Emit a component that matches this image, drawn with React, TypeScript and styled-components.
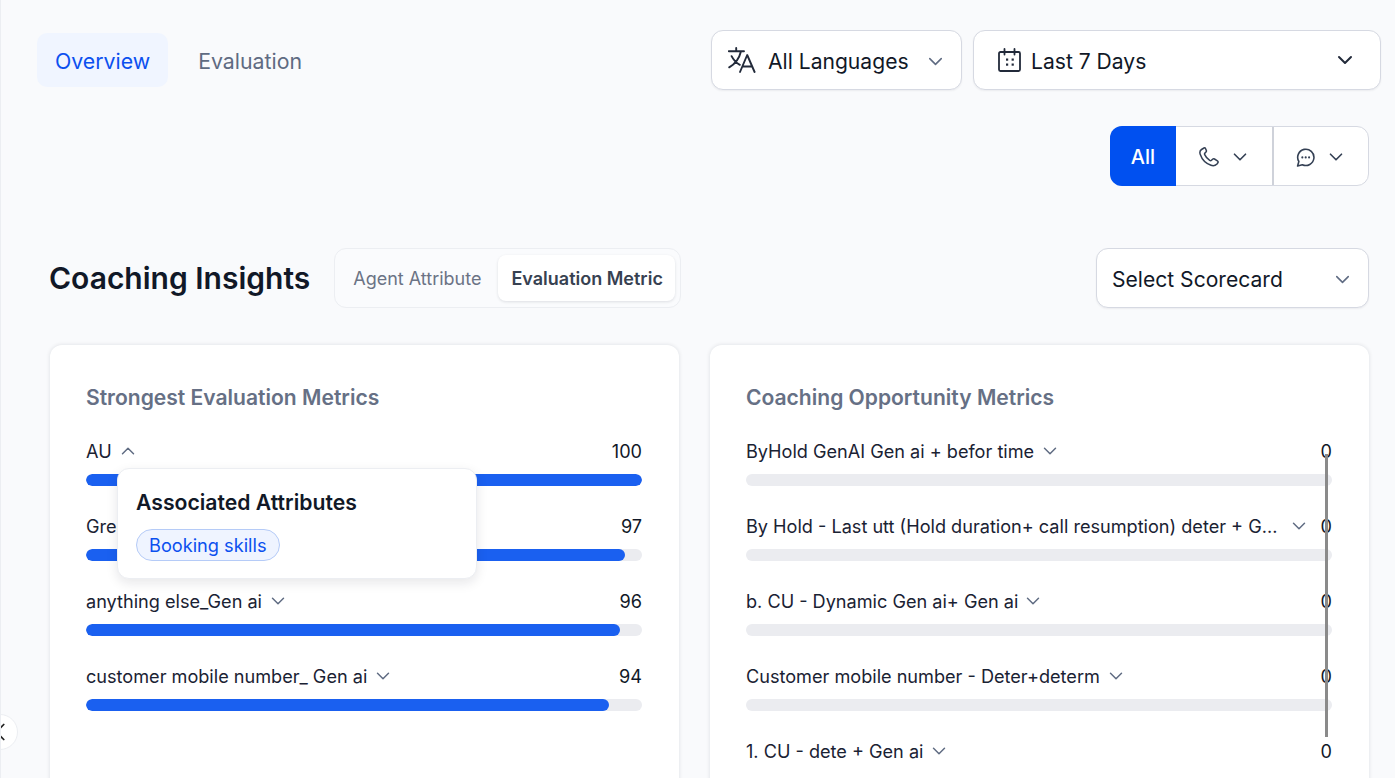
import React from "react";
import styled, { createGlobalStyle } from "styled-components";
import { ChevronDown, ChevronUp, ChevronLeft } from "lucide-react";

const Global = createGlobalStyle`
  html, body { margin: 0; padding: 0; height: 778px; overflow: hidden; background: #f9fafc; }
  * { box-sizing: border-box; }
  body { font-family: Inter, "Liberation Sans", sans-serif; color: #111827; }
`;

const Page = styled.div`
  position: relative;
  width: 1395px;
  height: 778px;
  overflow: hidden;
  background: #f9fafc;
  border-left: 1px solid #eceef2;
  padding: 30px 14px 0 36px;
`;
const TopBar = styled.div`
  display: flex;
  justify-content: space-between;
  align-items: center;
  height: 60px;
`;
const NavTabs = styled.div`
  display: flex;
`;
const NavTab = styled.div<{ $active?: boolean }>`
  height: 54px;
  padding: 2px 18px 0;
  margin-right: 12px;
  display: flex;
  align-items: center;
  border-radius: 10px;
  font-size: 21.3px;
  background: ${p => (p.$active ? "#f0f5ff" : "transparent")};
  color: ${p => (p.$active ? "#0b50ef" : "#5f6b82")};
`;
const Filters = styled.div`
  display: flex;
  gap: 11px;
`;
const Select = styled.div<{ $w: number; $left?: number; $right?: number }>`
  width: ${p => p.$w}px;
  height: 60px;
  background: #fff;
  border: 1px solid #d6d9e2;
  border-radius: 12px;
  box-shadow: 0 1px 2px rgba(16, 24, 40, 0.06);
  display: flex;
  align-items: center;
  padding: 0 ${p => p.$right ?? 14}px 0 ${p => p.$left ?? 15}px;
  font-size: 21.1px;
  color: #111827;
`;
const SelectLabel = styled.span<{ $gap?: number }>`
  flex: 1;
  margin-left: ${p => p.$gap ?? 0}px;
  padding-top: 2px;
  white-space: nowrap;
`;
const SoftChevron = styled(ChevronDown)`
  flex: none;
  margin-top: 3px;
  color: #5f6b82;
`;
const Glyph = styled.svg`
  flex: none;
  display: block;
  fill: none;
  stroke: currentColor;
  stroke-linecap: round;
  stroke-linejoin: round;
`;
const ChannelRow = styled.div`
  display: flex;
  justify-content: flex-end;
  margin-top: 36px;
  margin-right: 12px;
`;
const Channels = styled.div`
  display: flex;
  height: 60px;
  width: 259px;
  background: #fff;
  border: 1px solid #d6d9e2;
  border-radius: 12px;
`;
const ChannelAll = styled.div`
  width: 66px;
  margin: -1px 0 -1px -1px;
  padding-top: 2px;
  background: #0050f0;
  color: #fff;
  border-radius: 12px 0 0 12px;
  display: flex;
  align-items: center;
  justify-content: center;
  font-size: 20px;
  font-weight: 500;
`;
const ChannelItem = styled.div<{ $w: number; $line?: boolean }>`
  width: ${p => p.$w}px;
  display: flex;
  align-items: center;
  gap: 10px;
  padding: 2px 0 0 ${p => (p.$line ? 22 : 23)}px;
  color: #344054;
  border-left: ${p => (p.$line ? "2px solid #cfd2da" : "none")};
`;
const SectionHead = styled.div`
  display: flex;
  align-items: center;
  margin: 62px 12px 0;
  height: 60px;
`;
const Title = styled.h1`
  margin: 0;
  font-size: 30px;
  line-height: 36px;
  font-weight: 600;
  color: #111827;
  white-space: nowrap;
`;
const Toggle = styled.div`
  display: flex;
  align-items: center;
  gap: 4px;
  margin-left: 24px;
  height: 60px;
  padding: 6px 5px;
  border: 1px solid #eceef2;
  border-radius: 12px;
  background: #fafbfd;
`;
const ToggleItem = styled.div<{ $active?: boolean }>`
  height: 46px;
  padding: 0 ${p => (p.$active ? 12 : 13)}px 0 13px;
  display: flex;
  align-items: center;
  border-radius: 8px;
  font-size: 18px;
  white-space: nowrap;
  font-weight: ${p => (p.$active ? 600 : 400)};
  color: ${p => (p.$active ? "#374151" : "#6b7385")};
  background: ${p => (p.$active ? "#fff" : "transparent")};
  box-shadow: ${p => (p.$active ? "0 1px 3px rgba(16,24,40,.12)" : "none")};
`;
const Spacer = styled.div`
  flex: 1;
`;
const Cards = styled.div`
  display: flex;
  gap: 31px;
  margin-top: 37px;
  margin-left: 13px;
`;
const Card = styled.section<{ $w: number }>`
  position: relative;
  width: ${p => p.$w}px;
  height: 520px;
  flex: none;
  background: #fff;
  border-radius: 12px;
  box-shadow: 0 0 4px rgba(16, 24, 40, 0.12);
  padding: 39px 37px 0 36px;
`;
const CardTitle = styled.h2`
  margin: 0 0 25px;
  font-size: 21.05px;
  line-height: 27px;
  padding-bottom: 1px;
  font-weight: 600;
  color: #667085;
`;
const Row = styled.div`
  position: relative;
  height: 75px;
`;
const RowHead = styled.div`
  display: flex;
  align-items: center;
  justify-content: space-between;
  height: 28px;
  font-size: 18.12px;
  color: #111827;
`;
const RowLabel = styled.div<{ $gap?: number }>`
  display: flex;
  align-items: center;
  gap: ${p => p.$gap ?? 5}px;
  color: #1a2233;
  white-space: nowrap;
`;
const Track = styled.div`
  height: 12px;
  margin-top: 9px;
  border-radius: 6px;
  background: #ebecf0;
  overflow: hidden;
`;
const Fill = styled.div`
  height: 100%;
  border-radius: 6px;
  background: #1a60f0;
`;
const Popover = styled.div`
  position: absolute;
  left: 31px;
  top: 31px;
  z-index: 3;
  width: 360px;
  height: 111px;
  background: #fff;
  border: 1px solid #eceef2;
  border-radius: 12px;
  box-shadow: 0 4px 12px rgba(16, 24, 40, 0.1);
  padding: 19px 18px;
`;
const PopTitle = styled.div`
  font-size: 21.2px;
  line-height: 28px;
  font-weight: 600;
  color: #111827;
  white-space: nowrap;
`;
const Chip = styled.span`
  display: inline-flex;
  align-items: center;
  height: 32px;
  margin-top: 13px;
  padding: 0 12px;
  border-radius: 16px;
  background: #eff4ff;
  border: 1px solid #b5cbf7;
  font-size: 18.2px;
  color: #0b50ef;
`;
const Scrollbar = styled.div`
  position: absolute;
  left: 615px;
  top: 109px;
  width: 3px;
  height: 283px;
  background: #8a8a8a;
  z-index: 2;
`;
const Collapse = styled.div`
  position: absolute;
  left: -19px;
  top: 714px;
  width: 36px;
  height: 36px;
  border-radius: 50%;
  background: #fff;
  border: 1px solid #eceef2;
  display: flex;
  align-items: center;
  justify-content: center;
  color: #222;
  z-index: 4;
`;

const TranslateIcon = () => (
  <Glyph width="28" height="26" viewBox="0 0 28 26" strokeWidth="1.9" color="#222a3a">
    <path d="M.8 4.2H16M8.2 1v3.2M13 4.2C11.5 10.5 7 17 1.2 20.3M3.6 9.2c2 4 5 7 8.2 8.6" />
    <path d="M12 25l7.2-17 7.4 17M14.6 19.5h9.6" />
  </Glyph>
);
const CalendarIcon = () => (
  <Glyph width="23" height="24" viewBox="0 0 23 24" strokeWidth="1.8" color="#222a3a">
    <rect x="1" y="4" width="21" height="19" rx="1.4" />
    <path d="M6.5 1v5.5M16.5 1v5.5" />
    <g fill="currentColor" stroke="none">
      <rect x="8" y="10.5" width="2.2" height="2.2" />
      <rect x="13.6" y="10.5" width="2.2" height="2.2" />
      <rect x="8" y="15.5" width="2.2" height="2.2" />
      <rect x="13.6" y="15.5" width="2.2" height="2.2" />
    </g>
  </Glyph>
);
const PhoneIcon = () => (
  <Glyph width="20" height="20" viewBox="0 0 20 20" strokeWidth="1.5">
    <path d="M5 1 2.5 2.5C.8 3.5.6 5.5 1.3 7.5 3 12.5 7 16.5 12 18.3c2.500.9 4.500.2 6-1.300l1-1.500c.3-.7 0-1.300-.6-1.700L15.500 12c-.7-.4-1.400-.3-1.900.2l-1.100 1.100c-.5.5-1.200.5-1.800.1C8.500 12 6.800 10 5.700 7.600c-.3-.6-.1-1.300.4-1.700L7 5c.5-.5.5-1.200.2-1.800l-.7-1.700C6.200.9 5.600.7 5 1Z" />
  </Glyph>
);
const ChatIcon = () => (
  <Glyph width="19" height="19" viewBox="0 0 18 18" strokeWidth="1.5">
    <path d="M1.500 17 2.700 12.800A7.700 7.700 0 1 1 6 15.800Z" />
    <g fill="currentColor" stroke="none">
      <circle cx="6" cy="8.900" r="1" />
      <circle cx="9.200" cy="8.900" r="1" />
      <circle cx="12.400" cy="8.900" r="1" />
    </g>
  </Glyph>
);

const strong = [
  { label: "AU", value: 100, open: true },
  { label: "Greeting", value: 97 },
  { label: "anything else_Gen ai", value: 96 },
  { label: "customer mobile number_ Gen ai", value: 94 },
];
const weak = [
  { label: "ByHold GenAI Gen ai + befor time", track: true, gap: 5 },
  { label: "By Hold - Last utt (Hold duration+ call resumption) deter + G...", track: true, gap: 11 },
  { label: "b. CU - Dynamic Gen ai+ Gen ai", track: true, gap: 4 },
  { label: "Customer mobile number - Deter+determ", track: true, gap: 5 },
  { label: "1. CU - dete + Gen ai", track: false, gap: 5 },
];

export default function App() {
  return (
    <Page>
      <Global />
      <TopBar>
        <NavTabs>
          <NavTab $active>Overview</NavTab>
          <NavTab>Evaluation</NavTab>
        </NavTabs>
        <Filters>
          <Select $w={251} $left={16} $right={14}>
            <TranslateIcon />
            <SelectLabel $gap={12}>All Languages</SelectLabel>
            <SoftChevron size={23} strokeWidth={1.6} />
          </Select>
          <Select $w={408} $left={24} $right={23}>
            <CalendarIcon />
            <SelectLabel $gap={10}>Last 7 Days</SelectLabel>
            <ChevronDown size={24} color="#222a3a" strokeWidth={2} />
          </Select>
        </Filters>
      </TopBar>
      <ChannelRow>
        <Channels>
          <ChannelAll>All</ChannelAll>
          <ChannelItem $w={96}>
            <PhoneIcon />
            <ChevronDown size={22} strokeWidth={1.8} />
          </ChannelItem>
          <ChannelItem $w={96} $line>
            <ChatIcon />
            <ChevronDown size={22} strokeWidth={1.8} />
          </ChannelItem>
        </Channels>
      </ChannelRow>
      <SectionHead>
        <Title>Coaching Insights</Title>
        <Toggle>
          <ToggleItem>Agent Attribute</ToggleItem>
          <ToggleItem $active>Evaluation Metric</ToggleItem>
        </Toggle>
        <Spacer />
        <Select $w={273}>
          <SelectLabel>Select Scorecard</SelectLabel>
          <SoftChevron size={23} strokeWidth={1.6} />
        </Select>
      </SectionHead>
      <Cards>
        <Card $w={629}>
          <CardTitle>Strongest Evaluation Metrics</CardTitle>
          {strong.map(r => (
            <Row key={r.label}>
              <RowHead>
                <RowLabel>
                  {r.label}
                  {r.open ? <ChevronUp size={22} color="#5f6b82" strokeWidth={1.6} /> : <ChevronDown size={22} color="#5f6b82" strokeWidth={1.6} />}
                </RowLabel>
                <span>{r.value}</span>
              </RowHead>
              <Track>
                <Fill style={{ width: `${r.value}%` }} />
              </Track>
              {r.open && (
                <Popover>
                  <PopTitle>Associated Attributes</PopTitle>
                  <Chip>Booking skills</Chip>
                </Popover>
              )}
            </Row>
          ))}
        </Card>
        <Card $w={659}>
          <CardTitle>Coaching Opportunity Metrics</CardTitle>
          {weak.map(r => (
            <Row key={r.label}>
              <RowHead>
                <RowLabel $gap={r.gap}>
                  {r.label}
                  <ChevronDown size={22} color="#5f6b82" strokeWidth={1.6} />
                </RowLabel>
                <span>0</span>
              </RowHead>
              {r.track && <Track />}
            </Row>
          ))}
          <Scrollbar />
        </Card>
      </Cards>
      <Collapse>
        <ChevronLeft size={30} strokeWidth={1.4} />
      </Collapse>
    </Page>
  );
}
